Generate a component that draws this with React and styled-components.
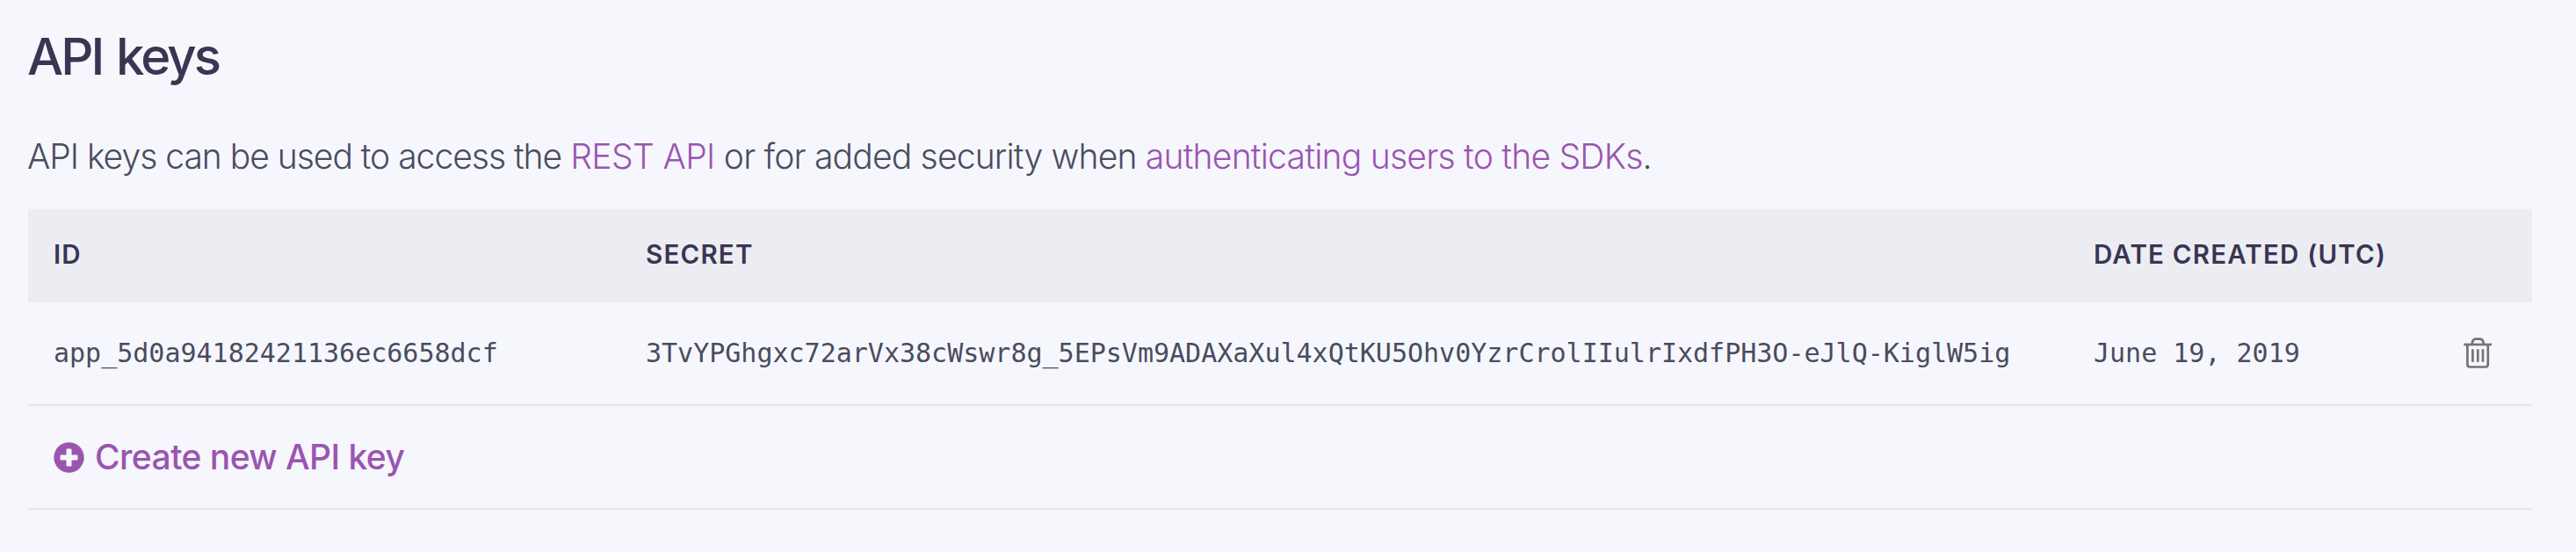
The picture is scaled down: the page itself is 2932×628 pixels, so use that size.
import React from "react";
import styled, { createGlobalStyle } from "styled-components";

const GlobalStyle = createGlobalStyle`
  body {
    margin: 0;
    background: #f6f7fc;
    font-family: Inter, "Liberation Sans", sans-serif;
  }
`;

const Page = styled.main`
  box-sizing: border-box;
  min-height: 628px;
  padding: 28px 50px 0 32px;
  color: #4a4c5f;
  white-space: nowrap;
`;

const Title = styled.h1`
  margin: 0 0 0 -1px;
  color: #393552;
  font-size: 58px;
  font-weight: 450;
  line-height: 73px;
  letter-spacing: -2.9px;
  word-spacing: 3px;
`;

const Intro = styled.p`
  margin: 47px 0 30px -1px;
  font-size: 39px;
  font-weight: 300;
  line-height: 60px;
`;

const Phrase = styled.span`
  letter-spacing: ${(p) => p.$tracking}px;
`;

const Link = styled.a`
  color: #9a55b1;
  letter-spacing: ${(p) => p.$tracking}px;
`;

const Table = styled.div`
  display: flex;
  flex-direction: column;
`;

const Row = styled.div`
  box-sizing: border-box;
  display: grid;
  grid-template-columns: 674px 1648px 1fr auto;
  align-items: center;
  height: 118px;
  padding: 0 46px 0 29px;
  border-bottom: 2px solid #e5e6eb;
  font-family: "DejaVu Sans Mono", "Liberation Mono", monospace;
  font-size: 30px;
`;

const HeaderRow = styled(Row)`
  height: 106px;
  padding-bottom: 4px;
  border-bottom: 0;
  background: #ecedf2;
  color: #393552;
  font-family: Inter, "Liberation Sans", sans-serif;
  font-size: 29.5px;
  font-weight: 600;
  letter-spacing: 1.2px;
`;

const FooterRow = styled(Row)`
  display: flex;
`;

const Value = styled.span`
  padding-bottom: 2px;
`;

const IconButton = styled.button`
  display: flex;
  padding: 0;
  border: 0;
  background: none;
  color: #747474;
`;

const CreateButton = styled.button`
  display: flex;
  align-items: center;
  gap: 12px;
  padding: 0;
  border: 0;
  background: none;
  color: #9a55b1;
  font: 450 39px/60px Inter, "Liberation Sans", sans-serif;
  letter-spacing: -0.55px;
`;

const TrashIcon = () => (
  <svg width="32" height="36" viewBox="0 0 32 36" fill="none" stroke="currentColor" strokeWidth="2.7">
    <path d="M.4 8H32" />
    <path d="M9.8 8C9.8 4 11.2 1.6 14 1.6h4.6c2.8 0 4.2 2.4 4.2 6.4" />
    <path d="M4.4 8v22.2c0 2.2 1.1 3.3 3.1 3.3h17.2c2 0 3.1-1.1 3.1-3.3V8" />
    <path d="M10.4 14.3v12.4M16.3 14.3v12.4M22 14.3v12.4" strokeLinecap="round" />
  </svg>
);

const PlusIcon = () => (
  <svg width="35" height="35" viewBox="0 0 35 35">
    <circle cx="17.5" cy="17.5" r="17.2" fill="currentColor" />
    <rect x="14.5" y="7.5" width="6" height="20" rx="1.3" fill="#f6f7fc" />
    <rect x="7.5" y="14.5" width="20" height="6" rx="1.3" fill="#f6f7fc" />
  </svg>
);

const keys = [
  {
    id: "app_5d0a94182421136ec6658dcf",
    secret: "3TvYPGhgxc72arVx38cWswr8g_5EPsVm9ADAXaXul4xQtKU5Ohv0YzrCrolIIulrIxdfPH3O-eJlQ-KiglW5ig",
    created: "June 19, 2019",
  },
];

export default function App() {
  return (
    <Page>
      <GlobalStyle />
      <Title>API keys</Title>
      <Intro>
        <Phrase $tracking={-1.01}>API keys can be used to access the </Phrase>
        <Link $tracking={-0.6}>REST API</Link>
        <Phrase $tracking={-0.8}> or for added security when </Phrase>
        <Link $tracking={-0.74}>authenticating users to the SDKs</Link>.
      </Intro>
      <Table>
        <HeaderRow>
          <span>ID</span>
          <span>SECRET</span>
          <span>DATE CREATED (UTC)</span>
        </HeaderRow>
        {keys.map((key) => (
          <Row key={key.id}>
            <Value>{key.id}</Value>
            <Value>{key.secret}</Value>
            <Value>{key.created}</Value>
            <IconButton aria-label="Delete key">
              <TrashIcon />
            </IconButton>
          </Row>
        ))}
        <FooterRow>
          <CreateButton>
            <PlusIcon />
            Create new API key
          </CreateButton>
        </FooterRow>
      </Table>
    </Page>
  );
}
